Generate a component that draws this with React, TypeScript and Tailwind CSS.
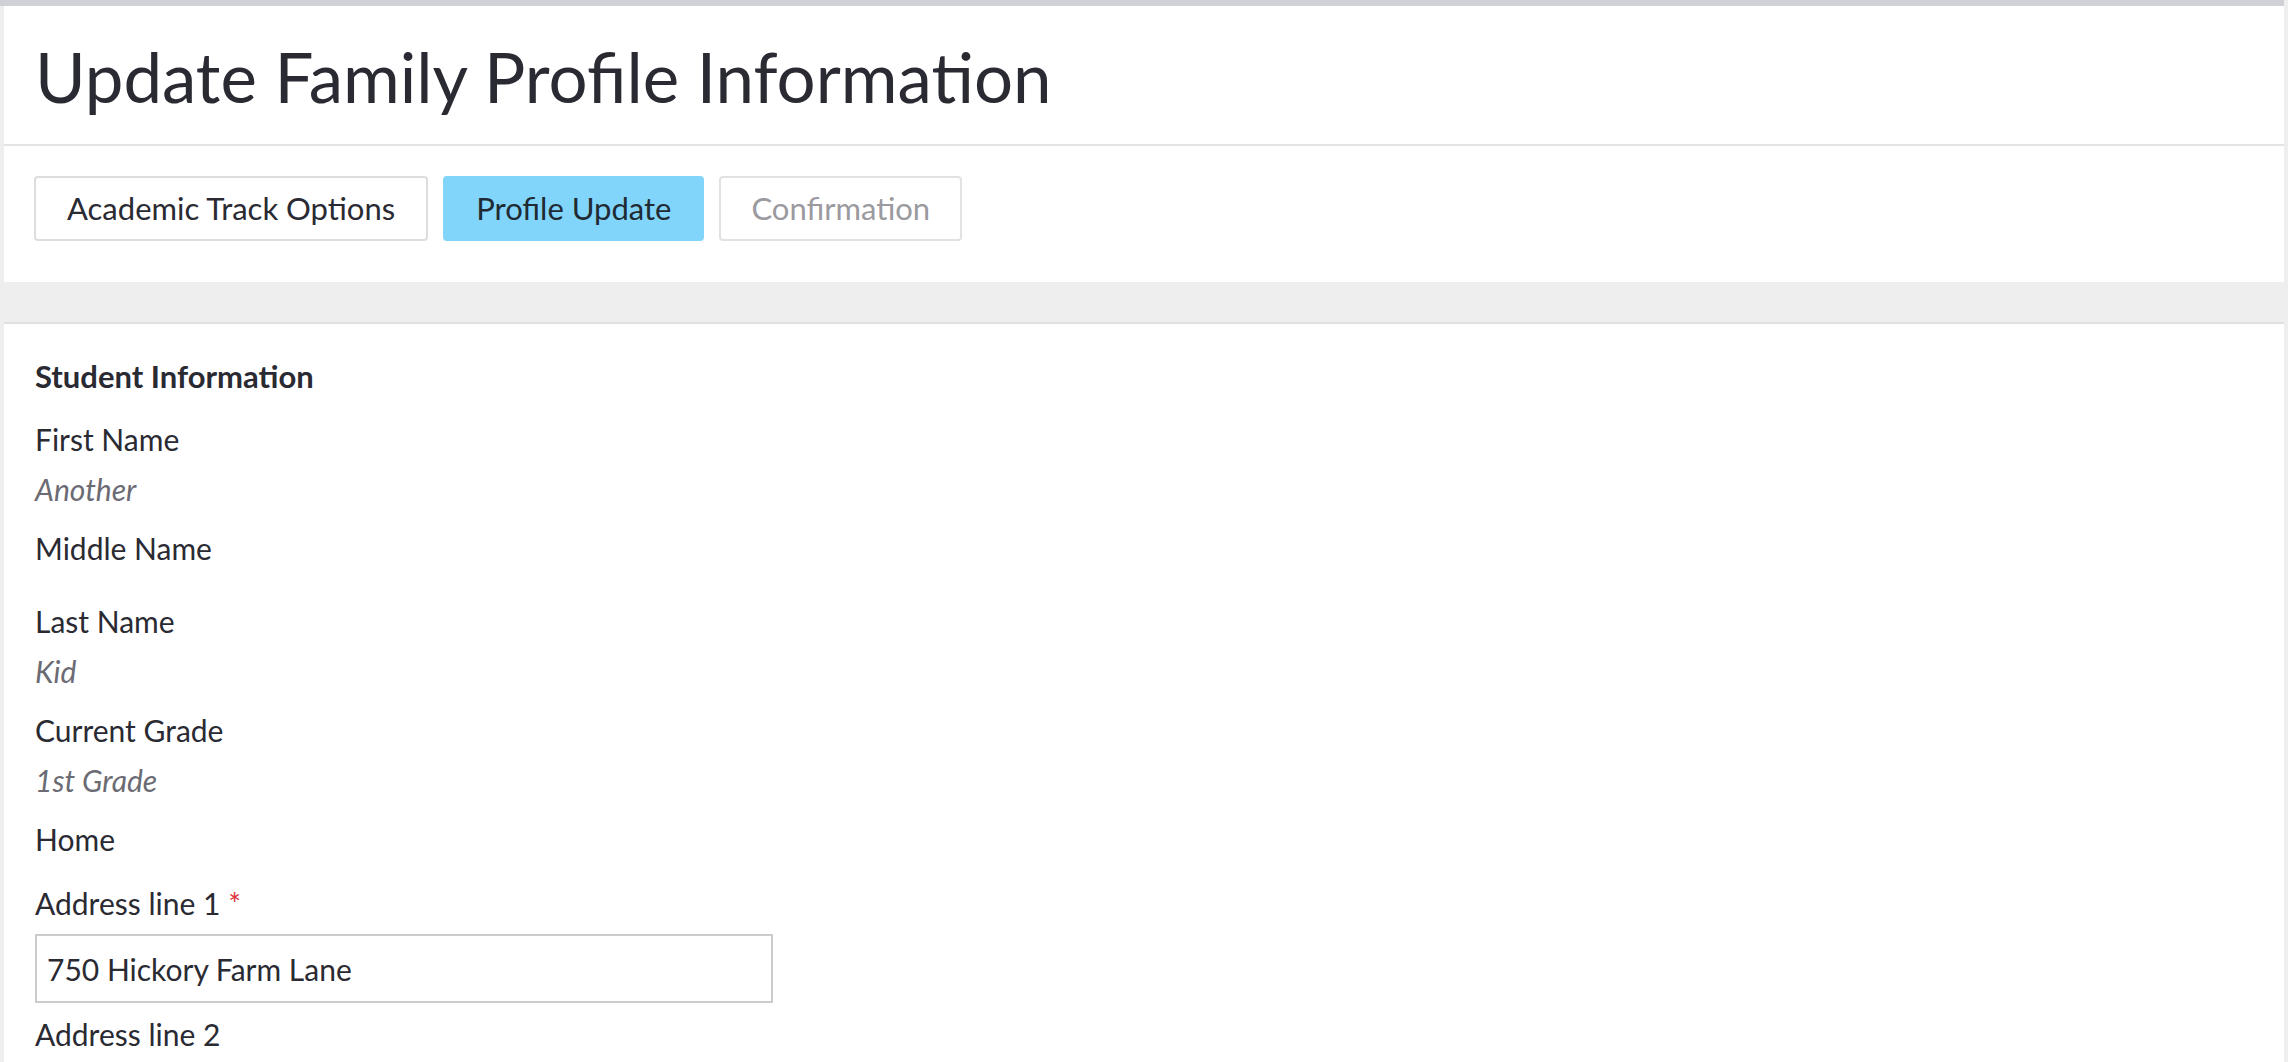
const font = { fontFamily: "Lato, 'Open Sans', sans-serif" };

type Field = { label: string; value?: string };

const studentFields: Field[] = [
  { label: "First Name", value: "Another" },
  { label: "Middle Name" },
  { label: "Last Name", value: "Kid" },
  { label: "Current Grade", value: "1st Grade" },
];

function ReadOnlyField({ label, value }: Field) {
  return (
    <div className="flex flex-col">
      <div className="mb-[14px] text-[30px] leading-[36px] text-[#2a2a33]">{label}</div>
      {value ? (
        <div className="mb-[23px] text-[30px] italic leading-[36px] text-[#6b6b73]">{value}</div>
      ) : (
        <div className="mb-[23px] h-0" />
      )}
    </div>
  );
}

function TextField({ label, value, required }: { label: string; value: string; required?: boolean }) {
  return (
    <div className="flex flex-col">
      <label className="mb-[13px] block text-[30px] leading-[36px] text-[#2a2a33]">
        {label}
        {required && <span className="ml-[8px] text-[#e0343c]">*</span>}
      </label>
      <input
        type="text"
        defaultValue={value}
        className="mb-[13px] block h-[69px] w-[738px] border-2 border-[#cccccc] bg-white px-[10px] text-[30px] text-[#2a2a33] outline-none"
        style={font}
      />
    </div>
  );
}

export default function App() {
  return (
    <div className="min-h-screen bg-[#eeeeee]" style={font}>
      <div className="h-[6px] w-[2284px] bg-[#d0d1d6]" />
      <div className="mx-[4px]">
        <div className="bg-white">
          <div className="border-b-2 border-[#e4e4e4] px-[31px] pb-[22px] pt-[26px]">
            <h1 className="text-[69px] font-normal leading-[90px] text-[#2a2a33]">
              Update Family Profile Information
            </h1>
          </div>
          <div className="flex gap-[15px] px-[30px] pb-[41px] pt-[30px]">
            <button className="h-[65px] rounded-[4px] border-2 border-[#dddddd] bg-white px-[31px] text-[31px] text-[#2a2a33]">
              Academic Track Options
            </button>
            <button className="h-[65px] rounded-[4px] border-2 border-[#81d4fa] bg-[#81d4fa] px-[31px] text-[31px] text-[#1f2a33]">
              Profile Update
            </button>
            <button className="h-[65px] rounded-[4px] border-2 border-[#e2e2e2] bg-white px-[30px] text-[31px] text-[#9a9a9f]">
              Confirmation
            </button>
          </div>
        </div>

        <div className="h-[40px]" />

        <div className="flex flex-col border-t-2 border-[#e0e0e0] bg-white px-[31px] pb-[40px] pt-[34px]">
          <h2 className="mb-[27px] text-[31px] font-bold leading-[36px] text-[#2a2a33]">
            Student Information
          </h2>
          {studentFields.map((f) => (
            <ReadOnlyField key={f.label} label={f.label} value={f.value} />
          ))}
          <div className="mb-[28px] text-[30px] leading-[36px] text-[#2a2a33]">Home</div>
          <TextField label="Address line 1" value="750 Hickory Farm Lane" required />
          <TextField label="Address line 2" value="" />
          <TextField label="City" value="" required />
        </div>
      </div>
    </div>
  );
}
